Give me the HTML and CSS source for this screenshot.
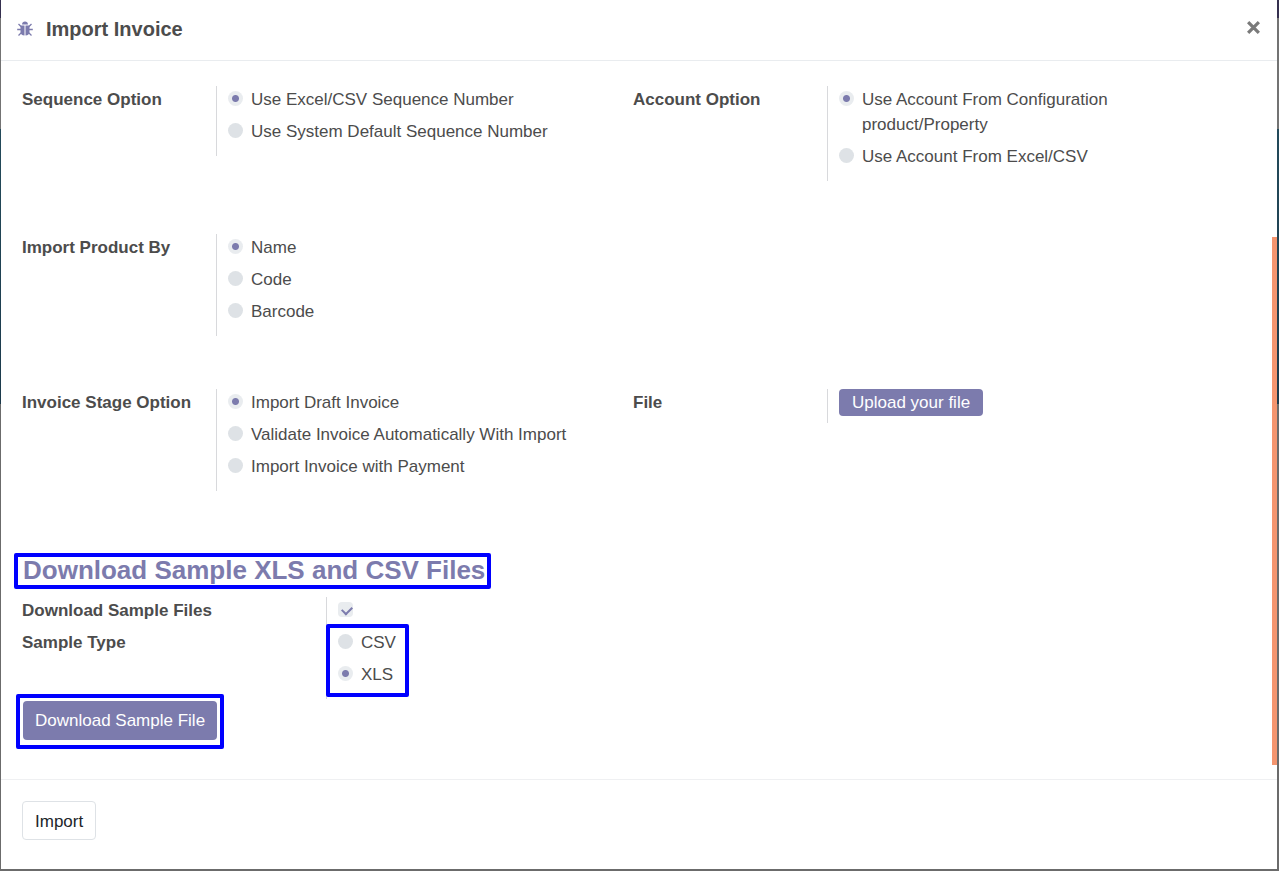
FILE: index.html
```html
<!DOCTYPE html>
<html lang="en">
<head>
<meta charset="utf-8">
<title>Import Invoice</title>
<link rel="stylesheet" href="styles.css">
</head>
<body>
<div class="backdrop">
<div class="modal" role="dialog" aria-labelledby="title">
  <header class="modal-header">
    <svg class="bug" viewBox="0 0 16 16" aria-hidden="true">
      <path d="M5 3.600C5 1.600 6.300.5 8 .5s3 1.100 3 3.100z"/>
      <path d="M3.500 4.500h4V14.500C5 14.500 3.500 13 3.500 10.500zM8.500 4.500h4v6c0 2.500-1.500 4-4 4z"/>
      <path class="legs" d="M4.500 6 1.500 3M11.500 6l3-3M4 8.500H.2M12 8.500h3.800M4.500 11.500l-3 3M11.500 11.500l3 3"/>
    </svg>
    <h1 class="modal-title" id="title">Import Invoice</h1>
    <button class="close" type="button" aria-label="Close">
      <svg viewBox="0 0 14 14" aria-hidden="true"><path d="M2 2l10 10M12 2L2 12"/></svg>
    </button>
  </header>

  <main class="modal-body">
    <div class="options">
      <div class="field" role="radiogroup" aria-labelledby="l-seq">
        <div class="label" id="l-seq">Sequence Option</div>
        <div class="value">
          <label class="choice"><input type="radio" name="seq" checked><span>Use Excel/CSV Sequence Number</span></label>
          <label class="choice"><input type="radio" name="seq"><span>Use System Default Sequence Number</span></label>
        </div>
      </div>
      <div class="field" role="radiogroup" aria-labelledby="l-acc">
        <div class="label" id="l-acc">Account Option</div>
        <div class="value">
          <label class="choice"><input type="radio" name="acc" checked><span>Use Account From Configuration product/Property</span></label>
          <label class="choice"><input type="radio" name="acc"><span>Use Account From Excel/CSV</span></label>
        </div>
      </div>
      <div class="field first-column" role="radiogroup" aria-labelledby="l-prod">
        <div class="label" id="l-prod">Import Product By</div>
        <div class="value">
          <label class="choice"><input type="radio" name="prod" checked><span>Name</span></label>
          <label class="choice"><input type="radio" name="prod"><span>Code</span></label>
          <label class="choice"><input type="radio" name="prod"><span>Barcode</span></label>
        </div>
      </div>
      <div class="field first-column" role="radiogroup" aria-labelledby="l-stage">
        <div class="label" id="l-stage">Invoice Stage Option</div>
        <div class="value">
          <label class="choice"><input type="radio" name="stage" checked><span>Import Draft Invoice</span></label>
          <label class="choice"><input type="radio" name="stage"><span>Validate Invoice Automatically With Import</span></label>
          <label class="choice"><input type="radio" name="stage"><span>Import Invoice with Payment</span></label>
        </div>
      </div>
      <div class="field">
        <label class="label" for="upload">File</label>
        <div class="value value-file"><button class="btn btn-primary btn-small" id="upload" type="button">Upload your file</button></div>
      </div>
    </div>

    <section class="samples">
      <h2 class="samples-title marked">Download Sample XLS and CSV Files</h2>
      <div class="sample-fields">
        <label class="label" for="dl">Download Sample Files</label>
        <div class="value value-check"><input type="checkbox" id="dl" checked></div>
        <div class="label" id="l-type">Sample Type</div>
        <div class="value" role="radiogroup" aria-labelledby="l-type">
          <div class="types marked">
            <label class="choice"><input type="radio" name="type"><span>CSV</span></label>
            <label class="choice"><input type="radio" name="type" checked><span>XLS</span></label>
          </div>
        </div>
      </div>
      <div class="download marked"><button class="btn btn-primary" type="button">Download Sample File</button></div>
    </section>
    <div class="scroll-thumb"></div>
  </main>

  <footer class="modal-footer">
    <button class="btn btn-light" type="button">Import</button>
  </footer>
</div>
</div>
</body>
</html>
```
FILE: styles.css
```css
* { box-sizing: border-box; }

body {
  margin: 0;
  color: #4c4c4c;
  font: 17px/25px "Liberation Sans", Arial, sans-serif;
}

.backdrop {
  display: flex;
  min-height: 100vh;
  padding: 0 2px 2px 1px;
  background: linear-gradient(#35304f 18px, #737373 18px 129px, #234a5a 129px, #1c3a4c 404px, #6b6b6b 404px);
}

.modal {
  display: flex;
  flex: 1;
  flex-direction: column;
  background: #fff;
}

.modal-header {
  display: flex;
  align-items: center;
  height: 61px;
  padding: 0 16px 2px;
  border-bottom: 1px solid #e9ecef;
}

.bug {
  width: 16px;
  height: 16px;
  margin-right: 13px;
  fill: #7c7bad;
}

.bug .legs { fill: none; stroke: #7c7bad; stroke-width: 1.3; }

.modal-title {
  flex: 1;
  margin: 0;
  font-size: 20px;
  line-height: 30px;
}

.close {
  display: flex;
  padding: 0 0 4px;
  border: 0;
  background: none;
}

.close svg {
  width: 15px;
  height: 15px;
  fill: none;
  stroke: #7a7a7a;
  stroke-width: 3;
}

.modal-body {
  position: relative;
  flex: 1;
  padding: 25px 33px 0 21px;
}

.options {
  display: grid;
  grid-template-columns: 1fr 1fr;
  row-gap: 53px;
  align-items: start;
}

.field {
  display: grid;
  grid-template-columns: 194px 1fr;
  align-items: start;
  padding-right: 22px;
}

.first-column { grid-column: 1; }

.label { padding-top: 1px; font-weight: bold; }

.value {
  padding: 1px 0 5px 11px;
  border-left: 1px solid #d8d9dc;
}

.value-file { height: 34px; padding-top: 0; }

.choice {
  display: flex;
  gap: 8px;
  margin-bottom: 7px;
}

input {
  flex: none;
  width: 15px;
  height: 15px;
  margin: 4px 0 0;
  appearance: none;
  background: #dee2e6;
}

input[type="radio"] { border-radius: 50%; }

input[type="radio"]:checked {
  background: radial-gradient(circle, #7c7bad 2px, #7c7bad 3px, #e9ecef 4px);
}

input[type="checkbox"] {
  display: block;
  border-radius: 4px;
  background: #e9ecef;
}

input[type="checkbox"]::before {
  display: block;
  width: 8px;
  height: 5px;
  margin: 4px 0 0 4px;
  border: solid #7c7bad;
  border-width: 0 0 2px 2px;
  content: "";
  transform: rotate(-45deg);
}

.btn {
  height: 39px;
  padding: 0 12px;
  border: 0;
  border-radius: 4px;
  font: inherit;
}

.btn-primary { background: #7c7bad; color: #fff; }
.btn-small { display: block; height: 27px; padding: 0 13px; }
.btn-light { padding: 2px 12px 0; border: 1px solid #dee2e6; background: #fff; color: #212529; }

.samples { padding-top: 65px; }

.samples-title {
  width: fit-content;
  margin: 0 0 13px 1px;
  color: #7c7bad;
  font-size: 26px;
  line-height: 28px;
}

.sample-fields {
  display: grid;
  grid-template-columns: 304px 1fr;
}

.sample-fields .value-check { height: 32px; padding: 1px 0 0 11px; }
.types { width: fit-content; }

.download { width: fit-content; margin: 2px 0 0 1px; }
.download .btn { display: block; }

/* Blue callout frames around the highlighted parts */
.marked { position: relative; }

.marked::after {
  position: absolute;
  inset: -3px -6px -5px -9px;
  border: 4px solid #00f;
  border-radius: 2px;
  content: "";
  pointer-events: none;
}

.types.marked::after { inset: -6px -13px -10px -12px; }
.download.marked::after { inset: -7px -7px -9px; }

.scroll-thumb {
  position: absolute;
  top: 24.500%;
  right: 0;
  bottom: 2%;
  width: 5px;
  background: #f4956f;
}

.modal-footer {
  padding: 21px 21px 29px;
  border-top: 1px solid #eff0f2;
}

.modal-footer .btn { display: block; }
```
